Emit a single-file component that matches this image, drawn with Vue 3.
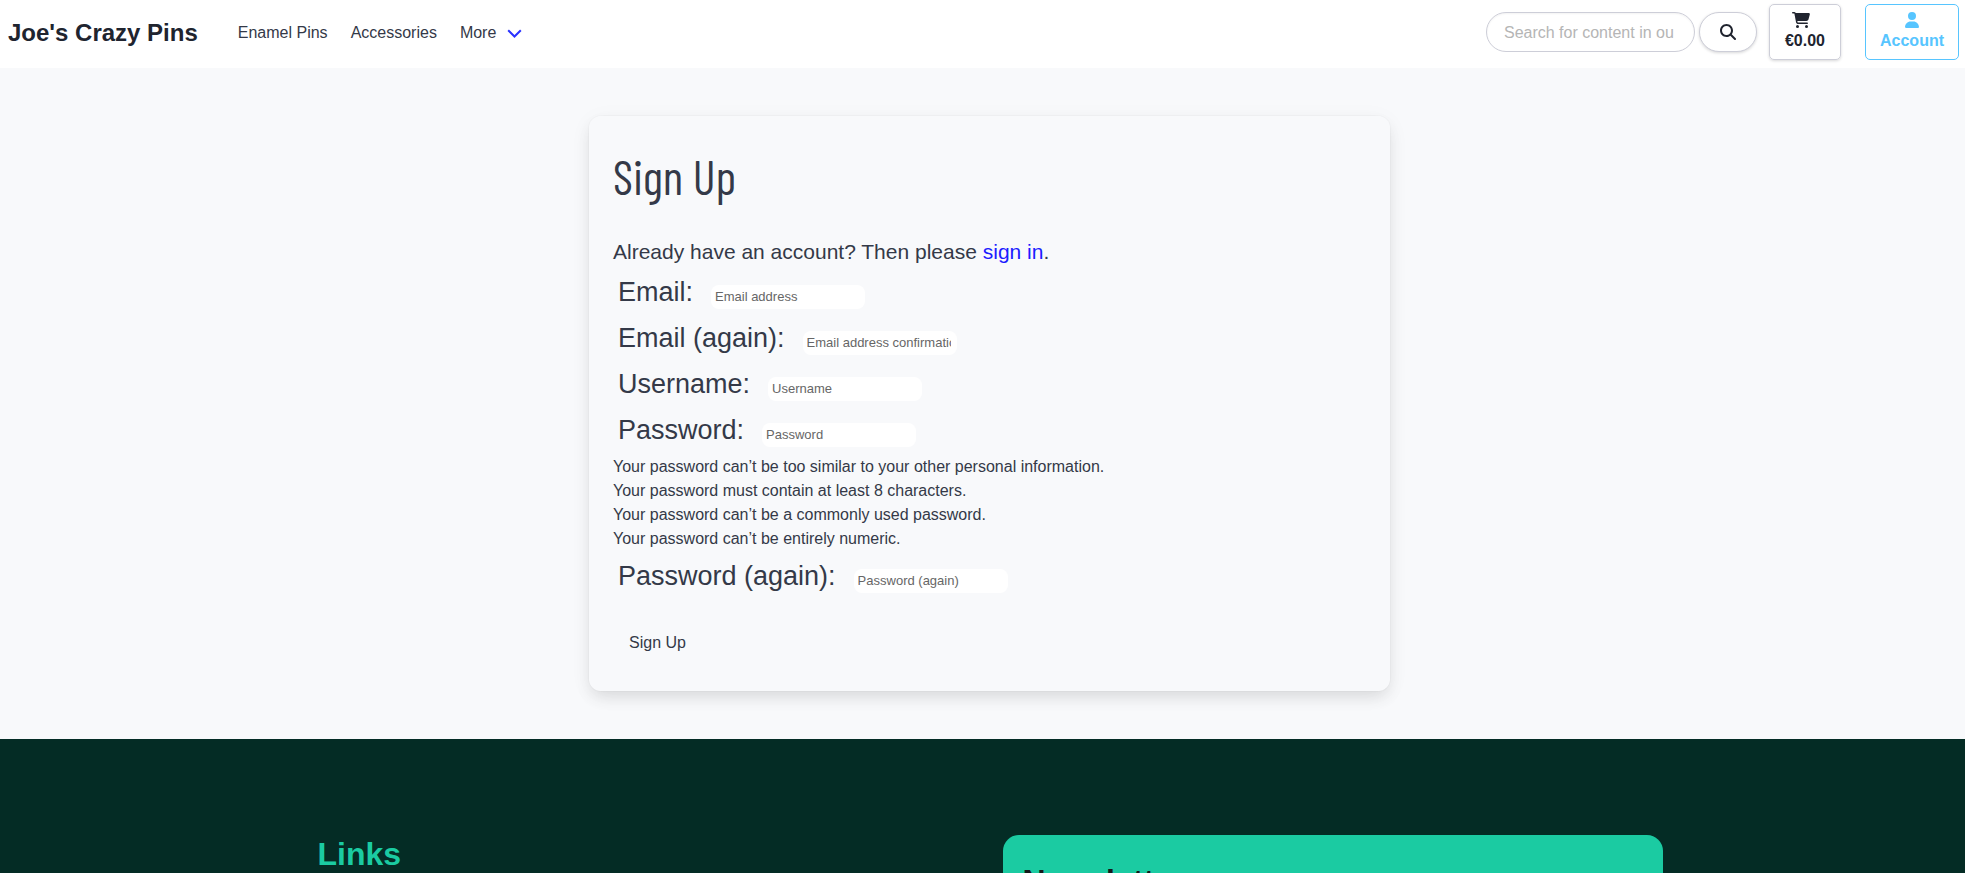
<script setup>
const navLinks = ['Enamel Pins', 'Accessories']

const accountFields = [
  { id: 'email', label: 'Email:', type: 'email', placeholder: 'Email address' },
  { id: 'email2', label: 'Email (again):', type: 'email', placeholder: 'Email address confirmation' },
  { id: 'username', label: 'Username:', type: 'text', placeholder: 'Username' },
  { id: 'password1', label: 'Password:', type: 'password', placeholder: 'Password' },
]

const passwordRules = [
  'Your password can’t be too similar to your other personal information.',
  'Your password must contain at least 8 characters.',
  'Your password can’t be a commonly used password.',
  'Your password can’t be entirely numeric.',
]
</script>

<template>
  <div class="page">
    <header class="navbar">
      <a class="brand" href="#">Joe's Crazy Pins</a>
      <nav class="menu" aria-label="Main">
        <a v-for="link in navLinks" :key="link" href="#">{{ link }}</a>
        <a class="more" href="#">
          More
          <svg width="15" height="9" viewBox="0 0 15 9" aria-hidden="true">
            <path d="M1.200 1.200 7.500 7.500l6.300-6.300" fill="none" stroke="#2a32ff" stroke-width="2" />
          </svg>
        </a>
      </nav>
      <form class="search" role="search" @submit.prevent>
        <input type="text" aria-label="Search" placeholder="Search for content in our store" />
        <button type="submit" aria-label="Submit search">
          <svg width="16" height="16" viewBox="0 0 512 512" aria-hidden="true">
            <path fill="currentColor" d="M416 208c0 45.900-14.900 88.300-40 122.700L502.600 457.400c12.500 12.500 12.500 32.800 0 45.300s-32.800 12.500-45.300 0L330.700 376c-34.400 25.200-76.800 40-122.700 40C93.100 416 0 322.900 0 208S93.100 0 208 0S416 93.100 416 208zM208 352a144 144 0 1 0 0-288 144 144 0 1 0 0 288z" />
          </svg>
        </button>
      </form>
      <a class="tile cart" href="#">
        <svg width="18" height="16" viewBox="0 0 576 512" aria-hidden="true">
          <path fill="currentColor" d="M0 24C0 10.700 10.700 0 24 0H69.500c22 0 41.500 12.800 50.600 32h411c26.300 0 45.500 25 38.600 50.400l-41 152.300c-8.500 31.400-37 53.300-69.500 53.300H170.700l5.400 28.500c2.200 11.300 12.100 19.500 23.600 19.500H488c13.300 0 24 10.700 24 24s-10.700 24-24 24H199.700c-34.600 0-64.300-24.600-70.700-58.500L77.400 54.500c-.7-3.800-4-6.500-7.900-6.500H24C10.700 48 0 37.300 0 24zM128 464a48 48 0 1 1 96 0 48 48 0 1 1-96 0zm336-48a48 48 0 1 1 0 96 48 48 0 1 1 0-96z" />
        </svg>
        <span>€0.00</span>
      </a>
      <a class="tile account" href="#">
        <svg width="14" height="16" viewBox="0 0 448 512" aria-hidden="true">
          <path fill="currentColor" d="M224 256A128 128 0 1 0 224 0a128 128 0 1 0 0 256zm-45.700 48C79.800 304 0 383.800 0 482.300C0 498.700 13.300 512 29.700 512H418.300c16.400 0 29.700-13.300 29.700-29.700C448 383.800 368.200 304 269.700 304H178.300z" />
        </svg>
        <span>Account</span>
      </a>
    </header>

    <main class="content">
      <section class="box">
        <h1>Sign Up</h1>
        <p class="intro">Already have an account? Then please <a href="#">sign in</a>.</p>
        <form @submit.prevent>
          <div v-for="field in accountFields" :key="field.id" class="field">
            <label :for="field.id">{{ field.label }}</label>
            <input :id="field.id" :type="field.type" :placeholder="field.placeholder" />
          </div>
          <ul class="rules">
            <li v-for="rule in passwordRules" :key="rule">{{ rule }}</li>
          </ul>
          <div class="field">
            <label for="password2">Password (again):</label>
            <input id="password2" type="password" placeholder="Password (again)" />
          </div>
          <button class="submit" type="submit">Sign Up</button>
        </form>
      </section>
    </main>

    <footer class="footer">
      <div class="columns">
        <section class="links">
          <h2>Links</h2>
        </section>
        <section class="newsletter">
          <h2>Newsletter</h2>
        </section>
      </div>
    </footer>
  </div>
</template>

<style>
body {
  margin: 0;
  background: #f8f9fb;
}
</style>

<style scoped>
.page {
  display: flex;
  flex-direction: column;
  height: 100vh;
  overflow: hidden;
  font-family: "Liberation Sans", Arial, sans-serif;
  font-size: 16px;
  line-height: 24px;
  color: #343948;
  background: #f8f9fb;
}
.page * {
  box-sizing: border-box;
}
a {
  color: inherit;
  text-decoration: none;
}
h1,
h2,
p,
ul {
  margin: 0;
  padding: 0;
}
input,
button {
  font-family: inherit;
  margin: 0;
}

.navbar {
  display: flex;
  align-items: center;
  flex-shrink: 0;
  padding: 4px 6px 8px 8px;
  background: #fff;
}
.brand {
  padding-top: 2px;
  font-size: 24px;
  font-weight: 700;
  color: #20242f;
  white-space: nowrap;
}
.menu {
  display: flex;
  gap: 23px;
  margin-left: 40px;
  padding-top: 2px;
  flex: 1;
}
.more {
  display: flex;
  align-items: center;
  gap: 11px;
}
.search {
  display: flex;
  gap: 4px;
  margin-right: 12px;
}
.search input,
.search button {
  height: 40px;
  border: 1px solid #cdced8;
  border-radius: 20px;
  background: #fff;
  color: #20242f;
}
.search input {
  width: 209px;
  padding: 1px 20px 0 17px;
  font-size: 16px;
  box-shadow: inset 0 1px 2px rgba(10, 10, 10, 0.05);
}
.search input::placeholder {
  color: #b5b5b5;
}
.search button {
  display: flex;
  align-items: center;
  justify-content: center;
  width: 58px;
  padding: 0;
  box-shadow: 0 1px 3px rgba(10, 10, 20, 0.16);
}
.tile {
  display: flex;
  flex-direction: column;
  align-items: center;
  height: 56px;
  padding: 7px 15px 0;
  border: 1px solid #cdced8;
  border-radius: 5px;
  font-weight: 700;
}
.tile span {
  padding-top: 1px;
}
.cart {
  color: #20242f;
  box-shadow: 0 1px 3px rgba(10, 10, 20, 0.16);
}
.cart svg {
  margin-right: 8px;
}
.account {
  margin-left: 24px;
  padding: 7px 14px 0;
  color: #57c5ff;
  border-color: #57c5ff;
}

.content {
  flex-shrink: 0;
  padding: 48px 24px 48px 38px;
}
.box {
  max-width: 801px;
  margin: 0 auto;
  padding: 24px;
  border-radius: 12px;
  box-shadow: 0 8px 16px -2px rgba(10, 10, 10, 0.1), 0 0 0 1px rgba(10, 10, 10, 0.02), 0 4px 24px rgba(10, 10, 10, 0.04);
}
h1 {
  font-family: "Barlow Condensed", "Roboto Condensed", "Liberation Sans", sans-serif;
  font-size: 48px;
  font-weight: 400;
  line-height: 72px;
}
.intro {
  margin-top: 24px;
  font-size: 21px;
  line-height: 32px;
}
.intro a {
  color: #1c1cff;
}
.field {
  display: flex;
  align-items: baseline;
  gap: 18px;
  height: 46px;
  padding: 4px 5px 0;
}
.field label {
  font-size: 27px;
  line-height: 40px;
}
.field input {
  width: 154px;
  height: 24px;
  padding: 0 6px 0 4px;
  border: 0;
  border-radius: 8px;
  background: #fff;
  font-size: 13px;
}
.field input::placeholder {
  color: #666;
}
.rules {
  margin: 3px 0 1px;
  list-style: none;
}
.submit {
  display: block;
  height: 40px;
  margin-top: 25px;
  margin-bottom: 4px;
  padding: 0 16px;
  border: 0;
  background: transparent;
  color: inherit;
  font-size: 16px;
}

.footer {
  flex-shrink: 0;
  padding: 96px 24px;
  background: #042c25;
}
.columns {
  display: grid;
  grid-template-columns: 1fr 1fr;
  gap: 40px;
  max-width: 1360px;
  margin: 0 auto;
}
h2 {
  font-size: 32px;
  font-weight: 700;
  line-height: 36px;
}
.links {
  padding: 1px 15px;
  color: #1bcba2;
}
.newsletter {
  padding: 28px 20px;
  border-radius: 16px;
  background: #1bcba2;
  color: #141a1a;
}
</style>
